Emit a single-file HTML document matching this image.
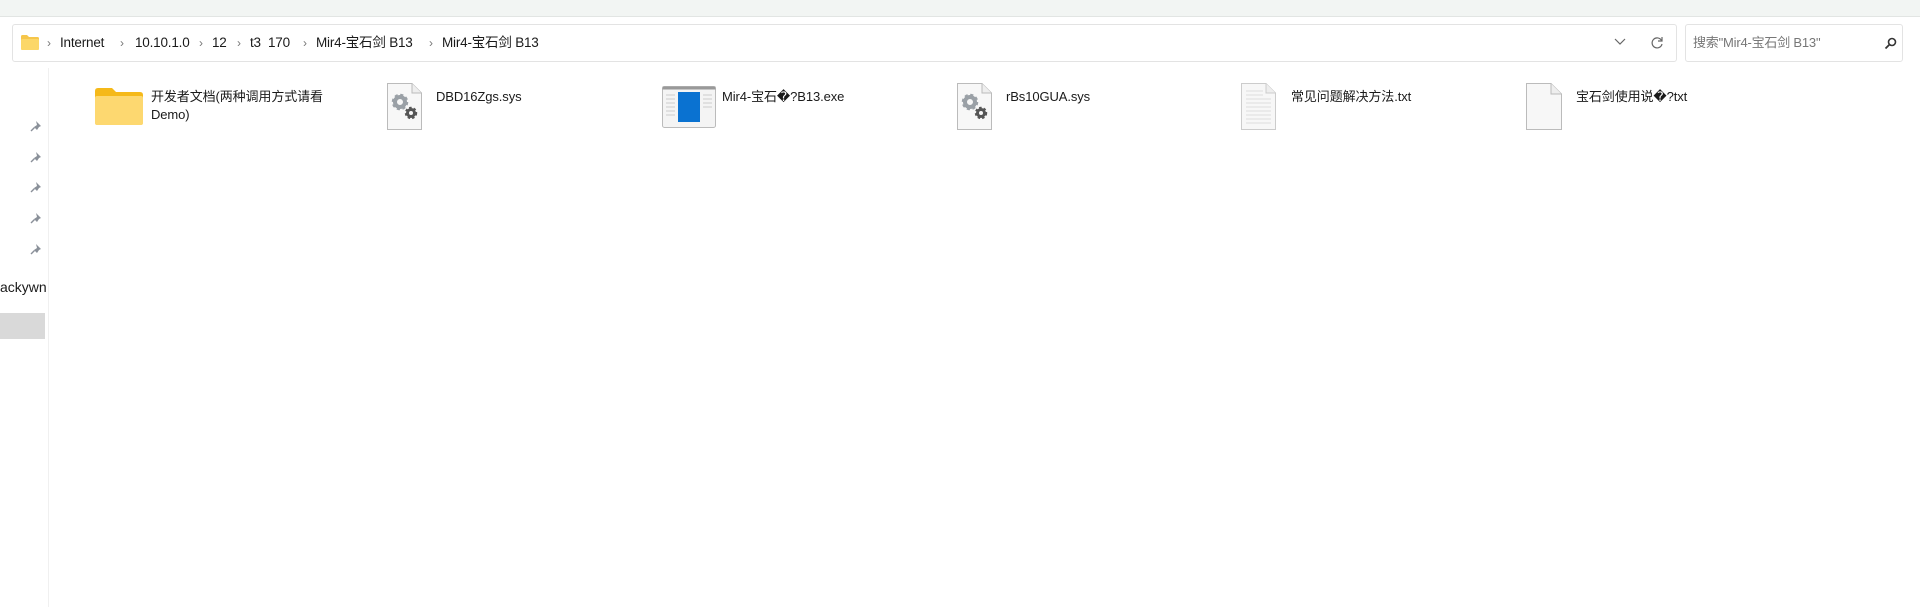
<!DOCTYPE html>
<html><head><meta charset="utf-8"><style>
body{margin:0;width:1920px;height:607px;background:#fff;position:relative;overflow:hidden;font-family:"Liberation Sans","Noto Sans CJK SC",sans-serif;color:#1a1a1a}
.a{position:absolute}
.top{left:0;top:0;width:1920px;height:16px;background:#f2f5f3;border-bottom:1px solid #e2e5e3}
.bar{top:24px;height:38px;border:1px solid #e3e3e3;border-radius:3px;background:#fff;box-sizing:border-box}
.bc{top:34px;font-size:13.5px;line-height:18px;white-space:nowrap;letter-spacing:-0.2px}
.ch{top:34px;font-size:12px;color:#777;line-height:18px}
.lbl{font-size:13px;line-height:18px;top:88px;letter-spacing:-0.1px}
</style></head><body>
<div class="a top"></div>
<div class="a bar" style="left:12px;width:1665px"></div>
<div class="a bar" style="left:1685px;width:218px"></div>
<svg class="a" style="left:21px;top:35px" width="18" height="15" viewBox="0 0 18 15"><path d="M0 1.5Q0 0 1.5 0H6l2 2h8.5Q18 2 18 3.5V13.5Q18 15 16.5 15H1.5Q0 15 0 13.5Z" fill="#f6c64a"/><rect x="0" y="4" width="18" height="11" rx="1.5" fill="#fcd768"/></svg>
<div class="a ch" style="left:47px">›</div>
<div class="a bc" style="left:60px">Internet</div>
<div class="a ch" style="left:120px">›</div>
<div class="a bc" style="left:135px">10.10.1.0</div>
<div class="a ch" style="left:199px">›</div>
<div class="a bc" style="left:212px">12</div>
<div class="a ch" style="left:237px">›</div>
<div class="a bc" style="left:250px">t3&nbsp; 170</div>
<div class="a ch" style="left:303px">›</div>
<div class="a bc" style="left:316px">Mir4-宝石剑 B13</div>
<div class="a ch" style="left:429px">›</div>
<div class="a bc" style="left:442px">Mir4-宝石剑 B13</div>
<svg class="a" style="left:1614px;top:38px" width="12" height="8"><path d="M1 1l5 5 5-5" stroke="#666" fill="none" stroke-width="1.2"/></svg>
<svg class="a" style="left:1650px;top:36px" width="14" height="14"><path d="M11.5 4.5A5 5 0 1 0 12 8" stroke="#666" fill="none" stroke-width="1.2"/><path d="M12 1v4h-4" stroke="#666" fill="none" stroke-width="1.2"/></svg>
<div class="a bc" style="left:1693px;color:#777;font-size:13px">搜索"Mir4-宝石剑 B13"</div>
<svg class="a" style="left:1884px;top:37px" width="13" height="13"><circle cx="8" cy="5" r="3.5" stroke="#333" stroke-width="1.6" fill="none"/><path d="M5.5 7.5L1.5 11.5" stroke="#333" stroke-width="1.8"/></svg>
<div class="a" style="left:48px;top:68px;width:1px;height:539px;background:#f0f0f0"></div>
<svg width="0" height="0" style="position:absolute"><defs><g id="pin"><path d="M6 1l5 5-2 1-2 3-3-3 3-2z" fill="#8a9099"/><path d="M4.5 7.5L1 11" stroke="#8a9099" stroke-width="1.4"/></g></defs></svg>
<svg class="a" style="left:30px;top:120px" width="12" height="12"><use href="#pin"/></svg>
<svg class="a" style="left:30px;top:151px" width="12" height="12"><use href="#pin"/></svg>
<svg class="a" style="left:30px;top:181px" width="12" height="12"><use href="#pin"/></svg>
<svg class="a" style="left:30px;top:212px" width="12" height="12"><use href="#pin"/></svg>
<svg class="a" style="left:30px;top:243px" width="12" height="12"><use href="#pin"/></svg>
<div class="a" style="left:0;top:279px;font-size:14px">ackywn</div>
<div class="a" style="left:0;top:313px;width:45px;height:26px;background:#d9d9d9"></div>
<svg class="a" style="left:95px;top:88px" width="48" height="37" viewBox="0 0 48 37"><path d="M0 3Q0 0 3 0H17l4 4H45Q48 4 48 7V34Q48 37 45 37H3Q0 37 0 34Z" fill="#f5b919"/><path d="M0 10Q0 8 2 8H46Q48 8 48 10V35Q48 37 46 37H2Q0 37 0 35Z" fill="#fdd870"/></svg>
<div class="a lbl" style="left:151px">开发者文档(两种调用方式请看<br>Demo)</div>
<svg width="0" height="0" style="position:absolute"><defs><g id="sys"><path d="M0.5 0.5H25L34.5 10V46.5H0.5Z" fill="#f7f7f7" stroke="#bbb"/><path d="M25 0.5V10H34.5" fill="#eee" stroke="#bbb"/><circle cx="13" cy="19" r="5" fill="none" stroke="#9aa0a6" stroke-width="4"/><circle cx="13" cy="19" r="7" fill="none" stroke="#9aa0a6" stroke-width="2.5" stroke-dasharray="3 2.5"/><circle cx="24" cy="30" r="3.5" fill="none" stroke="#555" stroke-width="3"/><circle cx="24" cy="30" r="5.2" fill="none" stroke="#555" stroke-width="2" stroke-dasharray="2.5 2"/></g></defs></svg>
<svg class="a" style="left:387px;top:83px" width="35" height="47"><use href="#sys"/></svg>
<div class="a lbl" style="left:436px">DBD16Zgs.sys</div>
<svg class="a" style="left:662px;top:86px" width="54" height="42" viewBox="0 0 54 42"><rect x="0.5" y="0.5" width="53" height="41" rx="2" fill="#f4f4f4" stroke="#bbb"/><rect x="0.5" y="0.5" width="53" height="3" fill="#999"/><rect x="16" y="6" width="22" height="30" fill="#0a72d1"/><g stroke="#ccc"><path d="M4 9h9M4 13h9M4 17h9M4 21h9M4 25h9M4 29h9M41 9h9M41 13h9M41 17h9M41 21h9"/></g></svg>
<div class="a lbl" style="left:722px">Mir4-宝石�?B13.exe</div>
<svg class="a" style="left:957px;top:83px" width="35" height="47"><use href="#sys"/></svg>
<div class="a lbl" style="left:1006px">rBs10GUA.sys</div>
<svg class="a" style="left:1241px;top:83px" width="35" height="47" viewBox="0 0 35 47"><path d="M0.5 0.5H25L34.5 10V46.5H0.5Z" fill="#f7f7f7" stroke="#ccc"/><path d="M25 0.5V10H34.5" fill="#eee" stroke="#ccc"/><g stroke="#ddd"><path d="M5 8h17M5 12h17M5 16h25M5 20h25M5 24h25M5 28h25M5 32h25M5 36h25M5 40h25"/></g></svg>
<div class="a lbl" style="left:1291px">常见问题解决方法.txt</div>
<svg class="a" style="left:1526px;top:83px" width="36" height="47" viewBox="0 0 36 47"><path d="M0.5 0.5H25L35.5 11V46.5H0.5Z" fill="#f7f7f7" stroke="#bbb"/><path d="M25 0.5V11H35.5" fill="#eee" stroke="#bbb"/></svg>
<div class="a lbl" style="left:1576px">宝石剑使用说�?txt</div>
</body></html>
